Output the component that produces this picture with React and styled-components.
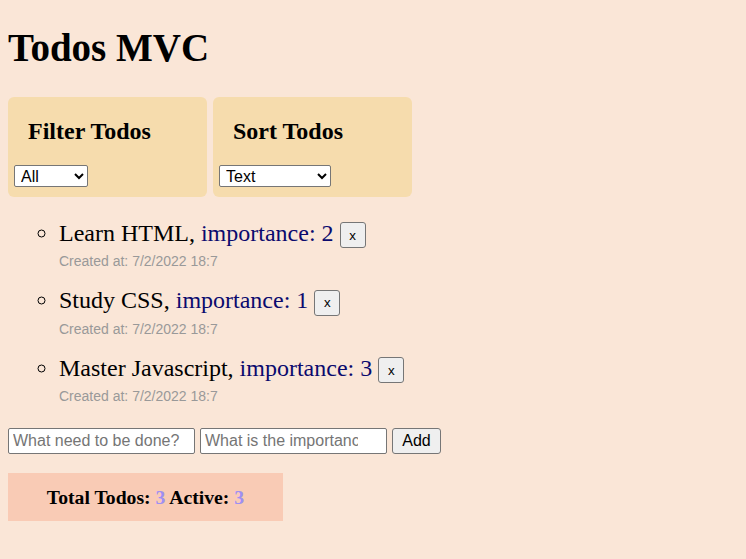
import React from "react";
import styled, { createGlobalStyle } from "styled-components";

const Global = createGlobalStyle`
  html, body { background: #fae6d7; }
  body { margin: 8px; font-family: "Liberation Serif", "Times New Roman", serif; color: #000; }
`;

const Title = styled.h1`
  font-size: 39px;
  font-weight: bold;
  margin: 18px 0 26px;
  line-height: 1.15;
`;

const Panels = styled.div`
  display: flex;
  gap: 6px;
`;

const Panel = styled.div`
  width: 199px;
  height: 100px;
  box-sizing: border-box;
  background: #f6dcad;
  border-radius: 6px;
  padding: 0 6px;
  display: flex;
  flex-direction: column;
`;

const PanelTitle = styled.h2`
  font-size: 24px;
  font-weight: bold;
  line-height: 1.15;
  margin: 21px 14px 20px;
`;

const Select = styled.select`
  width: ${(p) => p.$w}px;
  height: 22px;
  font-family: "Liberation Sans", Arial, sans-serif;
  font-size: 16px;
  background: #fff;
  border: 1px solid #767676;
  border-radius: 2px;
  padding: 0 2px;
  color: #000;
`;

const List = styled.ul`
  list-style: circle;
  margin: 23px 0 0;
  padding-left: 51px;
`;

const Item = styled.li`
  font-size: 24px;
  line-height: 1.15;
  margin-bottom: 18px;
`;

const Importance = styled.span`
  color: #0b0a6e;
`;

const DeleteButton = styled.button`
  font-family: "Liberation Sans", Arial, sans-serif;
  font-size: 13.33px;
  width: 26px;
  height: 26px;
  padding: 0;
  background: #efefef;
  border: 1px solid #767676;
  border-radius: 3px;
  color: #000;
  vertical-align: 1px;
`;

const Created = styled.div`
  font-family: "Liberation Sans", Arial, sans-serif;
  font-size: 14px;
  color: #999;
  line-height: 16px;
  margin-top: 5px;
`;

const Form = styled.div`
  display: flex;
  gap: 5px;
  margin-top: 24px;
`;

const Input = styled.input`
  width: 187px;
  height: 26px;
  box-sizing: border-box;
  font-family: "Liberation Sans", Arial, sans-serif;
  font-size: 16px;
  border: 1px solid #767676;
  border-radius: 2px;
  padding: 1px ${(p) => p.$padRight || 2}px 1px 4px;
  background: #fff;
  &::placeholder { color: #757575; }
`;

const AddButton = styled.button`
  height: 26px;
  width: 49px;
  font-family: "Liberation Sans", Arial, sans-serif;
  font-size: 16px;
  background: #efefef;
  border: 1px solid #767676;
  border-radius: 3px;
  color: #000;
  padding: 0;
`;

const Summary = styled.div`
  width: 275px;
  margin-top: 19px;
  background: #f9cbb5;
  padding: 13px 0;
  text-align: center;
  font-size: 19.7px;
  font-weight: bold;
  line-height: 22px;
`;

const Count = styled.span`
  color: #9f8ff2;
`;

const todos = [
  { text: "Learn HTML", importance: 2 },
  { text: "Study CSS", importance: 1 },
  { text: "Master Javascript", importance: 3 },
];

export default function App() {
  return (
    <>
      <Global />
      <Title>Todos MVC</Title>
      <Panels>
        <Panel>
          <PanelTitle>Filter Todos</PanelTitle>
          <Select $w={74} defaultValue="All">
            <option>All</option>
            <option>Active</option>
            <option>Done</option>
          </Select>
        </Panel>
        <Panel>
          <PanelTitle>Sort Todos</PanelTitle>
          <Select $w={112} defaultValue="Text">
            <option>Text</option>
            <option>Importance</option>
            <option>Date</option>
          </Select>
        </Panel>
      </Panels>
      <List>
        {todos.map((t) => (
          <Item key={t.text}>
            {t.text}, <Importance>importance: {t.importance}</Importance>{" "}
            <DeleteButton>x</DeleteButton>
            <Created>Created at: 7/2/2022 18:7</Created>
          </Item>
        ))}
      </List>
      <Form>
        <Input placeholder="What need to be done?" />
        <Input $padRight={28} placeholder="What is the importance?" />
        <AddButton>Add</AddButton>
      </Form>
      <Summary>
        Total Todos: <Count>3</Count> Active: <Count>3</Count>
      </Summary>
    </>
  );
}
